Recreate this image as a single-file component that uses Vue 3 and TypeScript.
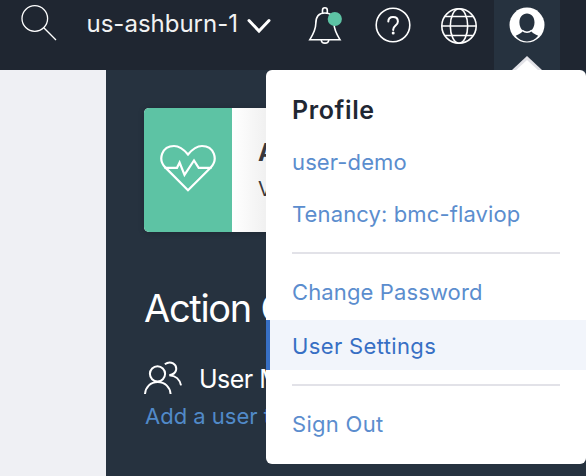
<script setup lang="ts">
interface MenuItem {
  label: string
  active?: boolean
}

const region = 'us-ashburn-1'
const groups: { name: string; items: MenuItem[] }[] = [
  { name: 'account', items: [{ label: 'user-demo' }, { label: 'Tenancy: bmc-flaviop' }] },
  { name: 'settings', items: [{ label: 'Change Password' }, { label: 'User Settings', active: true }] },
  { name: 'session', items: [{ label: 'Sign Out' }] },
]
</script>

<template>
  <div class="console">
    <header class="topbar">
      <svg class="search" viewBox="0 0 38 38" width="38" height="38">
        <circle cx="14.8" cy="15.5" r="12.8" />
        <path d="M23.8 24.8 36 37" />
      </svg>
      <div class="region">
        <span class="region-name">{{ region }}</span>
        <svg class="chevron" viewBox="0 0 24 16" width="24" height="16">
          <path d="m2 2.500 10 10.500L22 2.500" />
        </svg>
      </div>
      <svg class="icon bell" viewBox="0 0 36 40" width="36" height="40">
        <path d="M15.500 8.800V6.200a2.400 2.400 0 0 1 4.800 0v2.600M2.800 35.700C6 30.500 8.800 26 8.800 19.500c0-7 2.700-10.500 9.100-10.500s9.100 3.500 9.100 10.500c0 6.500 2.800 11 6 16.200z" />
        <path d="M14.200 35.700c.3 4.600 7.300 4.600 7.600 0" />
        <circle class="dot" cx="27.800" cy="15" r="7.100" />
      </svg>
      <svg class="icon help" viewBox="0 0 38 38" width="38" height="38">
        <circle cx="19" cy="19" r="16.800" />
        <path class="question" d="M14.300 15.600c0-2.900 2-4.600 4.700-4.600 2.800 0 4.900 1.700 4.900 4.400 0 4.200-4.700 4-4.700 8.200v.4" />
        <circle class="point" cx="19.200" cy="27.100" r="1.500" />
      </svg>
      <svg class="icon globe" viewBox="0 0 38 38" width="38" height="38">
        <circle cx="19" cy="19" r="17.200" />
        <ellipse cx="19" cy="19" rx="8.700" ry="17.200" />
        <path d="M2 19h34M5 9.500h28M5 28.500h28" />
      </svg>
      <div class="profile-tab">
        <svg viewBox="0 0 36 36" width="36" height="36">
          <circle cx="18" cy="18" r="17.500" fill="#fff" />
          <path class="figure" d="M18 6.500c4.500 0 7.500 3.600 7.500 8.900 0 3.700-1.500 6.500-3.500 8.100.5 2.200 3.500 3.500 7.200 5.300C26.300 32.400 22.500 34.400 18 34.400S9.700 32.400 6.700 28.800c3.700-1.800 6.700-3.100 7.200-5.300-2-1.600-3.500-4.400-3.500-8.100 0-5.300 3.100-8.900 7.600-8.900z" />
          <path class="collar" d="M13.200 23.400c3 2.300 6.600 2.300 9.600 0" />
        </svg>
      </div>
    </header>

    <main class="page">
      <section class="panel">
        <article class="card">
          <div class="card-icon">
            <svg viewBox="0 0 58 48" width="58" height="48">
              <path d="M29 46.200 6.200 23.400C-1.500 15.400 3 2 15 2c6.200 0 10 3.700 14 8.500C33 5.700 36.800 2 43 2c12 0 16.500 13.400 8.800 21.400z" />
              <path d="M5.500 23.800H18l2.600-5.300 4.900 12.300 9.500-14.300 4.700 7.300h12.800" />
            </svg>
          </div>
          <div class="card-body">
            <strong>All systems</strong>
            <span>View health</span>
          </div>
        </article>
        <h1>Action Center</h1>
        <div class="management">
          <svg viewBox="0 0 40 36" width="40" height="36">
            <circle cx="14.500" cy="13.800" r="7.600" />
            <path d="M2 34c.6-7 5.500-12 12.700-12s12.300 5 12.900 12M21.800 4.200c6-4.200 12.300.3 11.300 5.800-.6 3.300-3 4.600-6.800 5.200 6.200.2 10.600 4.300 11.700 10.200" />
          </svg>
          <span>User Management</span>
        </div>
        <a class="add-link">Add a user to your tenancy</a>
      </section>
    </main>

    <aside class="menu">
      <h2>Profile</h2>
      <ul v-for="group in groups" :key="group.name" :class="group.name">
        <li v-for="item in group.items" :key="item.label" :class="{ active: item.active }">
          <a>{{ item.label }}</a>
        </li>
      </ul>
    </aside>
  </div>
</template>

<style>
body {
  margin: 0;
  overflow: hidden;
}
</style>

<style scoped>
.console {
  position: relative;
  width: 586px;
  height: 476px;
  overflow: hidden;
  background: #eff0f4;
  font-family: Inter, 'Liberation Sans', sans-serif;
  white-space: nowrap;
}
svg {
  display: block;
  flex: none;
  fill: none;
  stroke: #fff;
  stroke-width: 1.6;
}
.topbar {
  display: flex;
  align-items: flex-start;
  box-sizing: border-box;
  height: 70px;
  padding-left: 20px;
  background: #1f2631;
}
.search {
  margin-top: 3px;
  stroke-width: 1.3;
}
.region {
  display: flex;
  width: 249px;
  box-sizing: border-box;
  padding: 8px 0 0 28.5px;
}
.region-name {
  width: 160.5px;
  color: #f1f2f3;
  font-size: 24px;
  line-height: 32px;
}
.chevron {
  margin-top: 10px;
  stroke-width: 3;
  stroke-linecap: round;
}
.bell {
  margin-top: 4px;
}
.dot {
  fill: #5dc3a4;
  stroke: none;
}
.help {
  margin: 6px 0 0 31px;
}
.question {
  stroke-width: 2;
  stroke-linecap: round;
}
.point {
  fill: #fff;
  stroke: none;
}
.globe {
  margin: 7px 0 0 28px;
}
.profile-tab {
  width: 66px;
  height: 70px;
  margin-left: 16px;
  background: #26323f;
}
.profile-tab svg {
  margin: 7px auto 0;
  stroke: none;
}
.profile-tab .figure {
  fill: #26323f;
}
.profile-tab .collar {
  stroke: #fff;
  stroke-width: 1.5;
}
.page {
  height: 406px;
  padding-left: 106px;
}
.panel {
  box-sizing: border-box;
  height: 406px;
  padding: 38px 0 0 38px;
  background: #26323f;
}
.card {
  display: flex;
  width: 400px;
  height: 124px;
  overflow: hidden;
  border-radius: 5px;
  background: #fff;
  box-shadow: 0 1px 6px rgba(0, 0, 0, 0.2);
}
.card-icon {
  display: flex;
  justify-content: center;
  width: 88px;
  padding-top: 36px;
  box-sizing: border-box;
  background: #5dc3a4;
}
.card-icon svg {
  stroke-width: 2.2;
}
.card-body {
  display: flex;
  flex: 1;
  flex-direction: column;
  padding: 28px 0 0 26px;
  background: linear-gradient(90deg, #fff, #eee 40px);
  color: #38383c;
}
.card-body strong {
  font-size: 24px;
  line-height: 34px;
}
.card-body span {
  font-size: 20px;
  line-height: 38px;
}
h1 {
  margin: 50px 0 0;
  color: #fff;
  font-size: 38px;
  font-weight: 400;
  line-height: 52px;
  letter-spacing: -1.3px;
}
.management {
  display: flex;
  height: 36px;
  margin-top: 26px;
  color: #fff;
  font-size: 25px;
  line-height: 38px;
  letter-spacing: -0.5px;
}
.management svg {
  margin: 0 16px 0 -1px;
  stroke-width: 2;
}
.add-link {
  display: block;
  margin-top: 2px;
  padding-left: 1px;
  color: #518ac9;
  font-size: 22px;
  line-height: 36px;
}
.menu {
  position: absolute;
  top: 70px;
  left: 266px;
  width: 320px;
  height: 394px;
  box-sizing: border-box;
  padding-top: 20px;
  border-radius: 6px;
  background: #fff;
}
.menu::before {
  position: absolute;
  top: -14px;
  left: 246px;
  width: 30px;
  height: 14px;
  background: #e2e2e7;
  clip-path: polygon(50% 0, 100% 100%, 0 100%);
  content: '';
}
.menu::after {
  position: absolute;
  top: -10px;
  left: 249px;
  width: 24px;
  height: 11px;
  background: #fff;
  clip-path: polygon(50% 0, 100% 100%, 0 100%);
  content: '';
}
h2 {
  margin: 0 0 0 26px;
  color: #1f2733;
  font-size: 25px;
  font-weight: 600;
  line-height: 40px;
  letter-spacing: 0.6px;
}
ul {
  margin: 0;
  padding: 0;
  list-style: none;
}
li {
  box-sizing: border-box;
  height: 50px;
  padding-left: 26px;
  color: #5b8dce;
  font-size: 22px;
  line-height: 51px;
  letter-spacing: 0.12px;
}
.account {
  padding-top: 7px;
}
.account li + li {
  margin-top: 2px;
}
.settings {
  padding-top: 13px;
}
.settings::before,
.session::before {
  display: block;
  height: 2px;
  margin: 0 26px 13px;
  background: #e2e2e8;
  content: '';
}
.settings .active {
  margin-top: 3px;
  padding-left: 22px;
  border-left: 4px solid #376fc4;
  background: #f2f5fb;
  color: #376fc4;
  line-height: 52px;
  letter-spacing: 0.36px;
}
.session {
  padding-top: 14px;
}
.session li {
  letter-spacing: 0.3px;
}
</style>
